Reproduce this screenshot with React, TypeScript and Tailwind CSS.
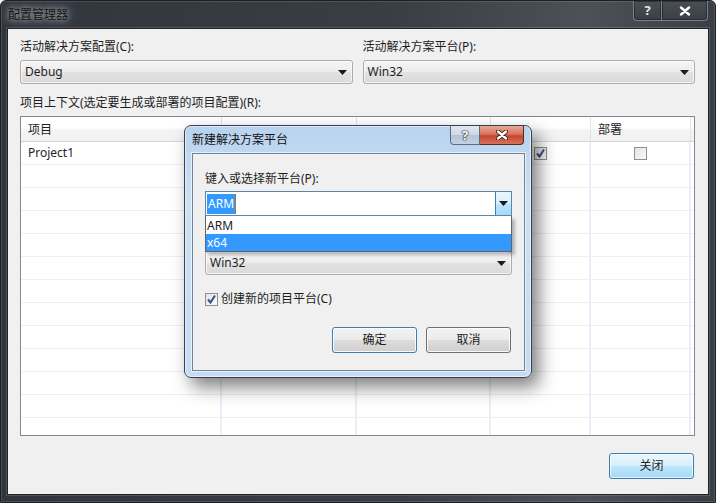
import React from "react";

// Win7-style push button face
const buttonFace =
  "flex items-center justify-center rounded-[3px] border text-[12px] text-[#1e1e1e] bg-[linear-gradient(#f2f2f2_0%,#ebebeb_50%,#dddddd_51%,#cfcfcf_100%)] shadow-[inset_0_0_0_1px_rgba(255,255,255,0.85)]";
const defaultButton =
  "flex items-center justify-center rounded-[3px] border border-[#3c7fb1] text-[12px] text-[#1e1e1e] bg-[linear-gradient(#eaf6fd_0%,#d9f0fc_50%,#bee6fd_51%,#a7d9f5_100%)] shadow-[inset_0_0_0_1px_rgba(255,255,255,0.7)]";
const comboFace =
  "flex items-center rounded-[3px] border border-[#acacac] bg-[linear-gradient(#f5f5f5_0%,#ececec_50%,#e2e2e2_51%,#dadada_100%)] shadow-[inset_0_0_0_1px_rgba(255,255,255,0.7)] text-[12px] text-[#1e1e1e]";

function DownArrow() {
  return (
    <svg width="9" height="5" viewBox="0 0 9 5" className="shrink-0">
      <path d="M0 0H9L4.5 5Z" fill="#1a1a1a" />
    </svg>
  );
}

function Combo({ value, className = "" }: { value: string; className?: string }) {
  return (
    <div className={`${comboFace} pl-[4px] pr-[5px] ${className}`}>
      <span className="flex-1">{value}</span>
      <DownArrow />
    </div>
  );
}

function CheckBox({ checked }: { checked: boolean }) {
  return (
    <div className="w-[13px] h-[13px] border border-[#8f8f8f] bg-[linear-gradient(135deg,#e4e4e4,#fafafa)] flex items-center justify-center shrink-0">
      {checked && (
        <svg width="11" height="11" viewBox="0 0 11 11">
          <path d="M2 5.5L4.5 8.5L9 1.5" stroke="#3a4f8c" strokeWidth="2" fill="none" />
        </svg>
      )}
    </div>
  );
}

function CloseGlyph({ dark }: { dark?: boolean }) {
  return (
    <svg width="12" height="10" viewBox="0 0 12 10">
      {dark && <path d="M2 1.5L10 8.5M10 1.5L2 8.5" stroke="#3b1c16" strokeWidth="4.2" strokeLinecap="round" />}
      <path d="M2 1.5L10 8.5M10 1.5L2 8.5" stroke="#ffffff" strokeWidth="2.4" strokeLinecap="round" />
    </svg>
  );
}

// headers of the columns under the dialog stay blank
const columns = ["项目", "", "", "", "部署"];
const rows = Array.from({ length: 13 }, (_, i) => i);

export default function App() {
  return (
    <div className="relative w-[716px] h-[503px] overflow-hidden font-['Noto_Sans','Noto_Sans_CJK_SC',sans-serif]">
      {/* window frame */}
      <div className="w-full h-full flex flex-col rounded-t-[6px] border border-[#1b1e22] bg-[linear-gradient(90deg,#31363d_0%,#393e45_55%,#4c5158_82%,#3a3f46_100%)] shadow-[inset_0_0_0_1px_rgba(255,255,255,0.12)]">
        <div className="h-[27px] flex items-start shrink-0">
          <span className="ml-[7px] mt-[6px] text-[12px] leading-[16px] text-[#141414] [text-shadow:0_0_5px_#a5a9ae,0_0_10px_#8a8f95,0_0_14px_#6f747a]">
            配置管理器
          </span>
          <div className="flex-1" />
          <div className="flex mr-[7px] h-[20px]">
            <div className="w-[29px] h-full border border-t-0 border-[#7b8188] rounded-bl-[4px] bg-[linear-gradient(#4a4f56,#3a3f46)] shadow-[inset_0_0_0_1px_rgba(0,0,0,0.35)] flex items-center justify-center text-[13px] font-bold text-[#e8e8e8] leading-none">
              ?
            </div>
            <div className="w-[46px] h-full border border-t-0 border-l-0 border-[#7b8188] rounded-br-[4px] bg-[linear-gradient(#4a4f56,#3a3f46)] shadow-[inset_0_0_0_1px_rgba(0,0,0,0.35)] flex items-center justify-center">
              <CloseGlyph />
            </div>
          </div>
        </div>

        {/* client area */}
        <div className="mx-[6px] h-[467px] border border-[#1f2328] bg-[#f0f0f0] shadow-[0_0_0_1px_rgba(255,255,255,0.15)] pl-[12px] pr-[13px] pt-[10px] flex flex-col text-[12px] text-[#1e1e1e]">
          <div className="grid grid-cols-2 gap-x-[10px]">
            <div className="flex flex-col">
              <span className="leading-[16px]">活动解决方案配置(C):</span>
              <Combo value="Debug" className="mt-[5px] h-[24px]" />
            </div>
            <div className="flex flex-col">
              <span className="leading-[16px]">活动解决方案平台(P):</span>
              <Combo value="Win32" className="mt-[5px] h-[24px]" />
            </div>
          </div>

          <span className="mt-[11px] leading-[16px]">项目上下文(选定要生成或部署的项目配置)(R):</span>

          {/* project grid */}
          <div className="mt-[5px] h-[320px] border border-[#828790] bg-white flex flex-col overflow-hidden">
            <div className="h-[25px] shrink-0 grid grid-cols-[201px_135px_134px_100px_100px_1fr] border-b border-[#d5d5d5] bg-[linear-gradient(#ffffff_0%,#ffffff_45%,#f4f4f4_55%,#f1f1f1_100%)]">
              {columns.map((c, i) => (
                <div key={i} className="border-r border-[#e3e3e3] pl-[7px] pt-[2px] flex items-center">
                  {c}
                </div>
              ))}
              <div />
            </div>
            <div className="flex-1 overflow-hidden">
              {rows.map((r) => (
                <div key={r} className="h-[23px] grid grid-cols-[201px_135px_134px_100px_100px_1fr]">
                  <div className="border-r-2 border-b border-r-[#e9eff8] border-b-[#efefef] pl-[7px] flex items-center">
                    {r === 0 ? "Project1" : ""}
                  </div>
                  <div className="border-r-2 border-b border-r-[#e9eff8] border-b-[#efefef]" />
                  <div className="border-r-2 border-b border-r-[#e9eff8] border-b-[#efefef]" />
                  <div className="border-r-2 border-b border-r-[#e9eff8] border-b-[#efefef] flex items-center justify-center">
                    {r === 0 && <CheckBox checked />}
                  </div>
                  <div className="border-r-2 border-b border-r-[#e9eff8] border-b-[#efefef] flex items-center justify-center">
                    {r === 0 && <CheckBox checked={false} />}
                  </div>
                  <div className="border-b border-b-[#efefef]" />
                </div>
              ))}
            </div>
          </div>

          <div className="mt-[17px] flex justify-end">
            <button className={`${defaultButton} w-[85px] h-[26px] mr-[1px]`}>关闭</button>
          </div>
        </div>
      </div>

      {/* new solution platform dialog */}
      <div className="absolute left-[184px] top-[125px] w-[348px] h-[253px] rounded-[7px] border border-[#35414e] bg-[linear-gradient(180deg,#b8d3ee_0%,#cce0f4_30%,#c6dcf2_100%)] shadow-[7px_9px_18px_rgba(0,0,0,0.5),inset_0_0_0_1px_rgba(255,255,255,0.55)] flex flex-col">
        <div className="relative h-[27px] shrink-0">
          <span className="absolute left-[7px] top-[6px] text-[12px] leading-[16px] text-[#111]">新建解决方案平台</span>
          <div className="absolute top-0 right-[7px] flex h-[19px]">
            <div className="w-[30px] h-full border border-t-0 border-[#5d6c7c] rounded-bl-[4px] bg-[linear-gradient(#e1e9f2_0%,#ccd8e5_50%,#b4c4d6_51%,#c3d2e2_100%)] flex items-center justify-center text-[13px] font-bold text-white leading-none [text-shadow:0_0_1px_#222,0_0_1px_#222,0_0_2px_#222]">
              ?
            </div>
            <div className="w-[44px] h-full border border-t-0 border-l-0 border-[#5a2a22] rounded-br-[4px] bg-[linear-gradient(#e8a798_0%,#d9755f_45%,#c7442d_55%,#d5735c_100%)] flex items-center justify-center">
              <CloseGlyph dark />
            </div>
          </div>
        </div>

        <div className="ml-[7px] mr-[6px] mb-[6px] flex-1 border border-[#71839a] bg-[#f0f0f0] shadow-[0_0_0_1px_rgba(255,255,255,0.6)] px-[12px] pt-[17px] flex flex-col text-[12px] text-[#1e1e1e]">
          <span className="leading-[16px]">键入或选择新平台(P):</span>
          <div className="relative mt-[4px]">
            <div className="h-[25px] flex border border-[#5c84ad] bg-white">
              <div className="flex-1 flex items-center pl-[1px]">
                <span className="bg-[#3399ff] text-white px-[1px] leading-[20px] border-r border-[#c07020]">ARM</span>
              </div>
              <div className="w-[16px] border-l border-[#3c7fb1] bg-[linear-gradient(#eaf6fd_0%,#d9f0fc_50%,#bee6fd_51%,#a7d9f5_100%)] flex items-center justify-center">
                <DownArrow />
              </div>
            </div>
            {/* open drop-down list */}
            <div className="absolute left-0 right-0 top-full z-10 h-[36px] border border-[#646464] border-t-0 bg-white shadow-[3px_3px_3px_rgba(0,0,0,0.25)] flex flex-col pt-[1px]">
              <div className="h-[17px] pl-[1px] flex items-center">ARM</div>
              <div className="h-[17px] pl-[1px] flex items-center bg-[#3399ff] text-white">x64</div>
            </div>
          </div>
          {/* room for the copy-from label, hidden by the open list */}
          <div className="mt-[14px] h-[16px]" />
          <Combo value="Win32" className="mt-[5px] h-[24px] pl-[2px]" />
          <div className="mt-[16px] h-[16px] flex items-center gap-[3px]">
            <CheckBox checked />
            <span>创建新的项目平台(C)</span>
          </div>
          <div className="mt-[20px] flex justify-end gap-[9px] pr-[1px]">
            <button className={`${buttonFace} w-[85px] h-[26px] border-[#3c7fb1] shadow-[inset_0_0_0_1px_#bfe3f8]`}>确定</button>
            <button className={`${buttonFace} w-[85px] h-[26px] border-[#707070]`}>取消</button>
          </div>
        </div>
      </div>
    </div>
  );
}
